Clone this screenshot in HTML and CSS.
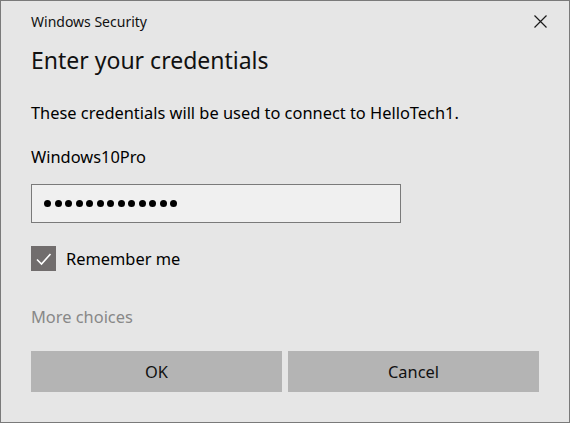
FILE: index.html
```html
<!DOCTYPE html>
<html>
<head>
<meta charset="utf-8">
<link rel="stylesheet" href="styles.css">
</head>
<body>
<div class="dialog">
  <div class="titlebar">
    <span class="title">Windows Security</span>
    <span class="close" aria-label="Close">
      <svg width="13" height="13" viewBox="0 0 13 13"><path d="M0.5 0.5 L12.5 12.5 M12.5 0.5 L0.5 12.5" stroke="#1a1a1a" stroke-width="1.2" fill="none"/></svg>
    </span>
  </div>
  <h1 class="heading">Enter your credentials</h1>
  <p class="message">These credentials will be used to connect to HelloTech1.</p>
  <p class="user">Windows10Pro</p>
  <div class="password" aria-label="Password">
    <span class="dot"></span><span class="dot"></span><span class="dot"></span><span class="dot"></span><span class="dot"></span><span class="dot"></span><span class="dot"></span><span class="dot"></span><span class="dot"></span><span class="dot"></span><span class="dot"></span><span class="dot"></span><span class="dot"></span>
  </div>
  <label class="remember">
    <span class="checkbox">
      <svg width="25" height="25" viewBox="0 0 25 25"><path d="M6 13.5 L10.5 18 L19.5 8" stroke="#ffffff" stroke-width="1.6" fill="none"/></svg>
    </span>
    <span class="remember-text">Remember me</span>
  </label>
  <div class="more">More choices</div>
  <div class="buttons">
    <button class="btn">OK</button>
    <button class="btn">Cancel</button>
  </div>
</div>
</body>
</html>
```
FILE: styles.css
```css
html, body {
  margin: 0;
  padding: 0;
  background: #f0f0f0;
}
.dialog {
  box-sizing: border-box;
  width: 570px;
  height: 423px;
  background: #e6e6e6;
  border: 1px solid #7a7a7a;
  font-family: "Noto Sans", "Open Sans", sans-serif;
  color: #000;
  padding: 0 30px;
}
.titlebar {
  display: flex;
  align-items: center;
  justify-content: space-between;
  height: 41px;
}
.title {
  font-size: 14px;
  color: #111;
}
.close {
  display: flex;
  margin-right: -8px;
}
.heading {
  margin: 0;
  font-weight: normal;
  font-size: 23px;
  line-height: 37px;
  color: #111;
}
.message {
  margin: 22px 0 0;
  font-size: 16.4px;
  line-height: 24px;
}
.user {
  margin: 20px 0 0;
  font-size: 16.4px;
  line-height: 24px;
}
.password {
  box-sizing: border-box;
  margin-top: 15px;
  width: 370px;
  height: 39px;
  border: 1px solid #7a7a7a;
  background: #f0f0f0;
  display: flex;
  align-items: center;
  gap: 3.5px;
  padding-left: 12px;
}
.dot {
  width: 7px;
  height: 7px;
  border-radius: 50%;
  background: #000;
}
.remember {
  display: flex;
  align-items: center;
  margin-top: 23px;
  gap: 10px;
}
.checkbox {
  width: 25px;
  height: 25px;
  background: #716d6d;
  display: flex;
}
.remember-text {
  font-size: 16.4px;
}
.more {
  margin-top: 34px;
  font-size: 16.4px;
  color: #888;
  line-height: 24px;
}
.buttons {
  display: flex;
  gap: 6px;
  margin-top: 22px;
  width: 508px;
}
.btn {
  flex: 1;
  height: 41px;
  border: none;
  background: #b4b4b4;
  font-family: "Noto Sans", "Open Sans", sans-serif;
  font-size: 16.4px;
  color: #111;
  padding: 0;
}
```
